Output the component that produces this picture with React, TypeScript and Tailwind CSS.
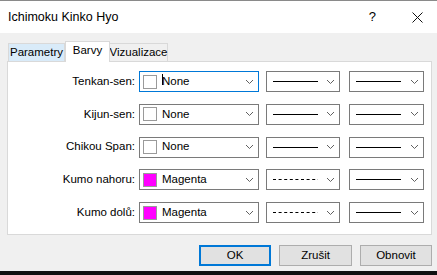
import type { ReactNode } from "react";

const font = { fontFamily: '"Liberation Sans", Arial, sans-serif' };

function Chevron() {
  return (
    <svg width="9" height="6" viewBox="0 0 9 6" className="shrink-0">
      <polyline points="1,1 4.5,4.5 8,1" fill="none" stroke="#606060" strokeWidth="1" />
    </svg>
  );
}

function Combo({
  width,
  focused,
  children,
}: {
  width: string;
  focused?: boolean;
  children: ReactNode;
}) {
  return (
    <div
      className={`${width} h-[21px] flex items-center justify-between bg-white border ${
        focused ? "border-[#0078d7]" : "border-[#7a7a7a]"
      } pr-[4px]`}
    >
      <div className="flex items-center h-full">{children}</div>
      <Chevron />
    </div>
  );
}

function ColorCombo({ color, name, focused }: { color: string; name: string; focused?: boolean }) {
  return (
    <Combo width="w-[120px]" focused={focused}>
      <span
        className="ml-[3px] w-[14px] h-[14px] border border-[#9a9a9a]"
        style={{ backgroundColor: color }}
      />
      <span className="ml-[5px] relative text-[11.5px] text-black">
        {focused && <span className="absolute left-0 top-[1px] w-px h-[11px] bg-black" />}
        {name}
      </span>
    </Combo>
  );
}

function LineCombo({ w, dashed }: { w: string; dashed?: boolean }) {
  return (
    <Combo width={w}>
      <svg width="45" height="3" viewBox="0 0 45 3" className="ml-[6px]">
        <line
          x1="0"
          y1="1.5"
          x2="45"
          y2="1.5"
          stroke="#000"
          strokeWidth="1.2"
          strokeDasharray={dashed ? "3 2.6" : undefined}
        />
      </svg>
    </Combo>
  );
}

const rows = [
  { label: "Tenkan-sen:", color: "#ffffff", name: "None", dashed: false, focused: true },
  { label: "Kijun-sen:", color: "#ffffff", name: "None", dashed: false },
  { label: "Chikou Span:", color: "#ffffff", name: "None", dashed: false },
  { label: "Kumo nahoru:", color: "#ff00ff", name: "Magenta", dashed: true },
  { label: "Kumo dolů:", color: "#ff00ff", name: "Magenta", dashed: true },
];

export default function App() {
  return (
    <div
      className="w-[437px] h-[275px] bg-[#f0f0f0] flex flex-col overflow-hidden border-t border-[#8a8a8a]"
      style={font}
    >
      <div className="h-[32px] bg-white flex items-center pl-[8px] shrink-0">
        <span className="text-[12.5px] text-black flex-1">Ichimoku Kinko Hyo</span>
        <span className="text-[13px] text-black mr-[36px]">?</span>
        <svg width="11" height="11" viewBox="0 0 11 11" className="mr-[14px]">
          <path d="M0.5 0.5 L10.5 10.5 M10.5 0.5 L0.5 10.5" stroke="#111" strokeWidth="1" />
        </svg>
      </div>

      <div className="pl-[7px] pr-[5px] pt-[8px] flex flex-col">
        <div className="flex items-end h-[20px] pl-[1px] text-[11.5px] text-black">
          <div className="w-[57px] h-[18px] bg-[#d9ebf9] border border-b-0 border-[#d9d9d9] flex items-center justify-center">
            Parametry
          </div>
          <div className="w-[45px] h-[21px] -mb-px bg-white border border-b-0 border-[#d9d9d9] flex items-center justify-center relative z-10 pb-[2px]">
            Barvy
          </div>
          <div className="w-[58px] h-[18px] bg-[#f0f0f0] border border-b-0 border-l-0 border-[#d9d9d9] flex items-center justify-center">
            Vizualizace
          </div>
        </div>

        <div className="h-[174px] bg-white border border-[#d9d9d9] pt-[9px] flex flex-col gap-[11.75px]">
          {rows.map((r) => (
            <div key={r.label} className="flex items-center h-[21px]">
              <span className="w-[131px] text-right text-[11.5px] text-black pr-[4px]">
                {r.label}
              </span>
              <ColorCombo color={r.color} name={r.name} focused={r.focused} />
              <div className="ml-[7px]">
                <LineCombo w="w-[74px]" dashed={r.dashed} />
              </div>
              <div className="ml-[9px]">
                <LineCombo w="w-[75px]" />
              </div>
            </div>
          ))}
        </div>

        <div className="flex justify-end gap-[8px] mt-[10px] text-[11.5px] text-black">
          <button className="w-[72px] h-[21px] bg-[#e1e1e1] border-2 border-[#0078d7]">OK</button>
          <button className="w-[73px] h-[21px] bg-[#e1e1e1] border border-[#adadad]">Zrušit</button>
          <button className="w-[72px] h-[21px] bg-[#e1e1e1] border border-[#adadad]">Obnovit</button>
        </div>
      </div>

      <div className="mt-auto h-[4px] bg-[#111111] shrink-0" />
    </div>
  );
}
